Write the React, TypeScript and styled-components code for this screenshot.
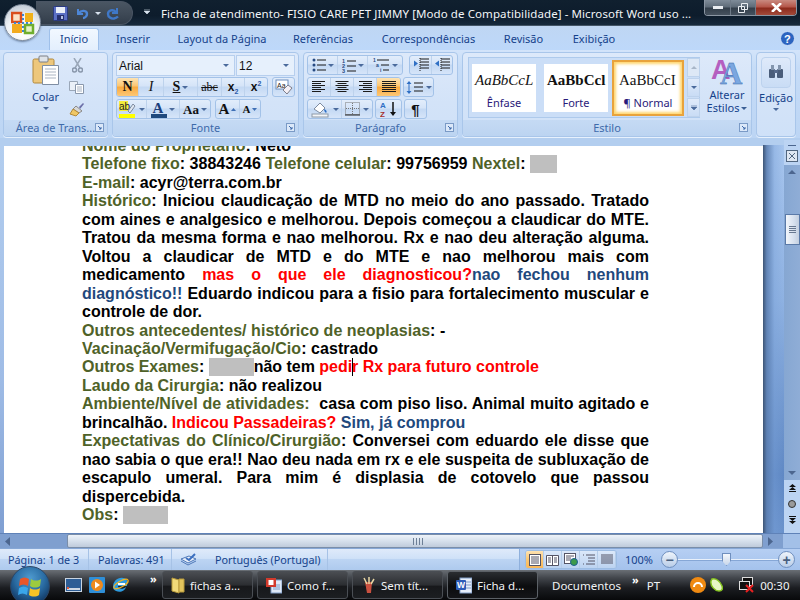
import React from "react";
import styled, { createGlobalStyle, css } from "styled-components";

const Global = createGlobalStyle`
  html, body { margin: 0; padding: 0; width: 800px; height: 600px; overflow: hidden; background: #bfdbff; }
  * { box-sizing: border-box; }
`;
const UI = `"Noto Sans", "Open Sans", sans-serif`;

const Screen = styled.div`
  position: relative; width: 800px; height: 600px; display: flex; flex-direction: column; overflow: hidden;
  font-family: ${UI};
`;

/* ---------- title bar ---------- */
const TitleBar = styled.div`
  height: 26px; flex: none; display: flex; align-items: flex-start; color: #f2f5f8;
  background: linear-gradient(180deg, #10202f 0%, #0d1c2c 60%, #16293c 96%, #6d7d8e 100%);
`;
const Qat = styled.div`
  margin-left: 36px; width: 97px; height: 24px; margin-top: 1px; display: flex; align-items: center; padding-left: 17px;
  border-radius: 0 12px 12px 0; border: 1px solid #4a5564; border-left: 0;
  background: linear-gradient(180deg, #4a5663 0%, #3f4a57 50%, #323d4a 100%);
`;
const QatSlot = styled.span<{ $w: number }>`
  width: ${p => p.$w}px; display: flex; justify-content: center; align-items: center; flex: none;
`;
const Customize = styled.span`
  width: 28px; display: flex; justify-content: center; margin-top: 9px; flex: none;
`;
const TitleText = styled.div`
  font-size: 11.5px; letter-spacing: 0.09px; line-height: 27px; white-space: pre; width: 543px; flex: none;
`;
const WinControls = styled.div`
  display: flex; height: 16px; width: 93px; flex: none; border: 1px solid #8b96a3; border-top: 0; border-radius: 0 0 4px 4px; overflow: hidden;
`;
const WinBtn = styled.div<{ $w: number; $close?: boolean }>`
  width: ${p => p.$w}px; flex: none; display: flex; align-items: center; justify-content: center;
  border-right: 1px solid #6f7b88;
  background: ${p => p.$close
    ? "linear-gradient(180deg,#c98a80 0%,#b5574a 45%,#8c2a1c 55%,#a34a3a 100%)"
    : "linear-gradient(180deg,#7f8c99 0%,#5f6c79 45%,#333f4b 55%,#46525f 100%)"};
`;
const OfficeOrb = styled.div`
  position: absolute; left: 4px; top: 4px; width: 37px; height: 37px; border-radius: 50%;
  background: radial-gradient(circle at 50% 80%, #ffffff 0%, #eef2f6 50%, #c3ccd6 85%, #8f99a6 100%);
  border: 1px solid #7f8b9b; display: flex; align-items: center; justify-content: center;
  box-shadow: 0 1px 2px rgba(30,50,80,.5);
`;

/* ---------- tabs ---------- */
const TabRow = styled.div`
  height: 24px; flex: none; display: flex; align-items: flex-end; padding-left: 49px;
  background: linear-gradient(180deg, #bfd6f3 0%, #bdd8fa 100%);
`;
const Tab = styled.div<{ $active?: boolean; $w: number }>`
  width: ${p => p.$w}px; height: 22px; flex: none; text-align: center; font-size: 11px; line-height: 21px; color: #15428b; white-space: nowrap;
  ${p => p.$active && css`
    background: linear-gradient(180deg,#f2f8ff 0%,#e3effd 100%);
    border: 1px solid #9fc0ea; border-bottom: 0; border-radius: 3px 3px 0 0;
    line-height: 20px;
  `}
`;
const HelpSlot = styled.div`
  margin-left: auto; margin-right: 5px; margin-bottom: 4px; display: flex;
`;

/* ---------- ribbon ---------- */
const Ribbon = styled.div`
  height: 88px; flex: none; display: flex; padding: 2px 4px 1px 3px; gap: 4px;
  background: linear-gradient(180deg, #d3e4fa 0%, #c6dcf7 20%, #bcd5f4 100%);
`;
const Group = styled.div<{ $w: number }>`
  width: ${p => p.$w}px; flex: none; display: flex; flex-direction: column; border: 1px solid #a9c6ea; border-radius: 4px; overflow: hidden;
  background: linear-gradient(180deg, #dde9fa 0%, #d3e3f8 60%, #cfe1f8 100%);
  box-shadow: 0 1px 0 #e7f1fd;
`;
const GroupBody = styled.div`
  flex: 1; min-height: 0; display: flex; padding: 2px 3px;
`;
const GroupLabel = styled.div`
  position: relative; height: 16px; flex: none; text-align: center; font-size: 11px; line-height: 16px; color: #3e6aaa;
  background: linear-gradient(180deg,#c5daf4 0%,#bcd4f1 100%);
`;
const Launcher = styled.span`
  position: absolute; right: 3px; top: 3px; width: 9px; height: 9px; display: flex;
`;
const PasteCol = styled.div`
  width: 55px; margin-left: 11px; flex: none; display: flex; flex-direction: column; align-items: center; color: #15428b; font-size: 11px;
`;
const PasteLabel = styled.div`
  margin-top: 5px; line-height: 13px;
`;
const ArrowRow = styled.div`
  margin-top: 4px; display: flex;
`;
const ClipCol = styled.div`
  flex: 1; margin-left: -4px; display: flex; flex-direction: column; align-items: flex-start; padding-top: 3px; gap: 8px;
`;
const CutSlot = styled.div`
  padding-left: 3px; display: flex;
`;
const Controls = styled.div`
  display: flex; flex-direction: column; gap: 2px; width: 100%;
`;
const Row = styled.div<{ $gap?: number }>`
  display: flex; height: 20px; gap: ${p => p.$gap ?? 4}px;
`;
const Combo = styled.div<{ $w: number }>`
  width: ${p => p.$w}px; flex: none; height: 21px; display: flex; align-items: center; justify-content: space-between; padding: 0 5px 0 2px;
  background: #e6f0fc; border: 1px solid #b7cfee; font: 12px "Liberation Sans", Arial, sans-serif; color: #111;
`;
const BtnGroup = styled.div`
  display: flex; height: 20px; flex: none; border: 1px solid #a3c2e8; border-radius: 3px; overflow: hidden;
  background: linear-gradient(180deg,#e2edfb 0%,#d5e4f8 45%,#c3d8f3 50%,#d6e5f9 100%);
`;
const Btn = styled.div<{ $w: number; $on?: boolean }>`
  width: ${p => p.$w}px; flex: none; display: flex; align-items: center; justify-content: center; gap: 2px;
  border-right: 1px solid #bdd2ec;
  &:last-child { border-right: 0; }
  ${p => p.$on && css`background: linear-gradient(180deg,#fde3b3 0%,#fbc672 45%,#f9a93f 50%,#fdc876 100%);`}
`;
const Glyph = styled.span<{ $f?: string; $s?: number; $c?: string; $i?: boolean; $b?: boolean; $u?: boolean; $x?: boolean }>`
  font-family: ${p => p.$f ?? `"Liberation Serif", serif`}; font-size: ${p => p.$s ?? 13}px; color: ${p => p.$c ?? "#111"};
  font-style: ${p => (p.$i ? "italic" : "normal")}; font-weight: ${p => (p.$b ? 700 : 400)}; line-height: 1;
  text-decoration: ${p => (p.$u ? "underline" : p.$x ? "line-through" : "none")};
`;
const Sub = styled.sub`
  font-size: 7px; color: #2a5aa8; line-height: 0;
`;
const Sup = styled.sup`
  font-size: 7px; color: #2a5aa8; line-height: 0;
`;
const Gallery = styled.div`
  width: 232px; height: 61px; margin: 2px 0 0 2px; flex: none; display: flex; align-items: center; border: 1px solid #aecaec; background: #cbdef7; padding-left: 3px; gap: 8px;
`;
const StyleCard = styled.div<{ $on?: boolean }>`
  width: ${p => (p.$on ? 72 : 64)}px; height: ${p => (p.$on ? 56 : 48)}px; flex: none; background: #fff; display: flex; flex-direction: column; align-items: center; overflow: hidden; white-space: nowrap;
  padding-top: ${p => (p.$on ? 3 : 1)}px;
  ${p => p.$on && css`border: 2px solid #e8a33c; box-shadow: inset 0 0 3px 2px #ffd66e; margin-left: -4px;`}
`;
const StylePreview = styled.div<{ $i?: boolean; $b?: boolean }>`
  font: ${p => (p.$i ? "italic " : "")}${p => (p.$b ? "700 " : "")}15px "Liberation Serif", serif; line-height: 30px; color: #111; width: 62px; overflow: hidden; text-align: left; padding-left: 2px;
`;
const StyleName = styled.div`
  font-size: 11px; line-height: 14px; color: #2a1a7a; margin-top: 1px;
`;
const GalleryScroll = styled.div`
  width: 13px; height: 59px; flex: none; margin-left: -5px; display: flex; flex-direction: column; gap: 1px;
`;
const ScrollCell = styled.div<{ $off?: boolean }>`
  flex: 1; display: flex; align-items: center; justify-content: center; border: 1px solid #bdd2ec;
  background: ${p => (p.$off ? "#dde8f6" : "linear-gradient(180deg,#dfeafa,#c9dcf5)")};
`;
const BigBtn = styled.div`
  width: 48px; flex: none; display: flex; flex-direction: column; align-items: center; font-size: 11px; line-height: 13px; color: #15428b; text-align: center; padding-top: 2px; margin-left: 3px;
`;
const BigIcon = styled.div`
  margin-bottom: 3px; display: flex;
`;
const ArrowInline = styled.span`
  display: inline-block; width: 0; height: 0; border: 3px solid transparent; border-top: 3px solid #3b5f95; border-bottom: 0; margin: 0 0 2px 2px;
`;
const EditBody = styled.div`
  display: flex; flex-direction: column; align-items: center; width: 100%; padding-top: 4px; font-size: 11px; color: #15428b;
`;
const EditIcon = styled.div`
  width: 30px; height: 31px; display: flex; align-items: flex-start; padding-top: 7px; justify-content: center; border: 1px solid #bcd2ee; border-radius: 4px; background: linear-gradient(180deg,#dfeafa,#c9dcf5);
`;
const EditText = styled.div`
  margin-top: 3px; line-height: 14px; margin-bottom: 3px;
`;

/* ---------- document ---------- */
const DocArea = styled.div`
  flex: 1; min-height: 0; display: flex; padding-top: 8px; background: #b3ceef;
`;
const LeftEdge = styled.div`
  width: 4px; flex: none; background: linear-gradient(180deg,#b3ceef 0%,#9fbce6 60%,#7f9fd2 100%);
`;
const Page = styled.div`
  width: 759px; flex: none; background: #fff; overflow: hidden; padding: 0 114px 0 78px;
`;
const Body = styled.div`
  margin-top: -9px; font: 700 16px/18.45px "Liberation Sans", Arial, sans-serif; color: #000; text-align: justify;
`;
const P = styled.div<{ $ls?: number }>`
  letter-spacing: ${p => p.$ls ?? 0}px;
`;
const Label = styled.span`color: #4f6228;`;
const Red = styled.span`color: #ff0000;`;
const Navy = styled.span`color: #1f497d;`;
const Redact = styled.span<{ $w: number }>`
  display: inline-block; width: ${p => p.$w}px; height: 18px; background: #bfbfbf; vertical-align: -4px;
`;
const Caret = styled.span`
  display: inline-block; width: 1px; height: 18px; background: #000; margin: 0 -1px 0 0; vertical-align: -4px;
`;
const Gutter = styled.div`
  width: 21px; flex: none; margin-top: -1px;
  background: linear-gradient(90deg,#3e5575 0%,rgba(90,125,175,.85) 18%,rgba(120,160,215,.35) 55%,rgba(160,195,240,0) 100%), linear-gradient(180deg,#a8c6ee 0%,#8fb2e2 40%,#5f88c4 85%,#6a92cc 100%);
`;
const VScroll = styled.div`
  width: 16px; flex: none; margin-top: -6px; display: flex; flex-direction: column; background: #bcd4f3;
`;
const SplitIcon = styled.div`
  height: 25px; flex: none; display: flex; flex-direction: column; align-items: center; padding-top: 5px; gap: 4px;
`;
const VTrack = styled.div`
  height: 315px; flex: none; display: flex; flex-direction: column; align-items: center; background: linear-gradient(90deg,#86a7d2,#8fadd6);
`;
const VArrow = styled.div<{ $down?: boolean }>`
  width: 0; height: 0; border: 4px solid transparent; margin: ${p => (p.$down ? "auto 0 5px" : "5px 0 0")};
  ${p => (p.$down ? "border-top-color:#4c668f; border-bottom:0;" : "border-bottom-color:#4c668f; border-top:0;")}
`;
const VThumb = styled.div`
  width: 15px; height: 31px; margin-top: 40px; border: 1px solid #5a7aa8; display: flex; flex-direction: column; align-items: center; justify-content: center; gap: 1px;
  background: linear-gradient(90deg,#f2f6fb,#d7e1ee 60%,#c3cfdf);
`;
const Grip = styled.span`
  width: 7px; height: 1px; background: #67788f;
`;
const BrowseBtns = styled.div`
  flex: 1; display: flex; flex-direction: column; align-items: center; justify-content: flex-start; gap: 8px; padding-top: 4px;
`;

/* ---------- horizontal scrollbar ---------- */
const HScroll = styled.div`
  height: 15px; flex: none; display: flex; background: #7f9fcf; border-top: 1px solid #5f82b8;
`;
const HArrowCell = styled.div<{ $w: number }>`
  width: ${p => p.$w}px; flex: none; display: flex; align-items: center; padding-left: 5px; background: #7f9fcf;
`;
const HThumb = styled.div`
  width: 696px; flex: none; display: flex; align-items: center; padding-left: 344px; gap: 1px;
  border: 1px solid #7a8ea9; border-radius: 2px; background: linear-gradient(180deg,#eef3f9,#d6e0ec 50%,#bfcbdb);
`;
const HGrip = styled.span`
  width: 1px; height: 7px; background: #6d7f96; margin-left: 1px;
`;
const HCorner = styled.div`
  flex: 1; background: #a3c0e8;
`;

/* ---------- status bar ---------- */
const Status = styled.div`
  height: 22px; flex: none; display: flex; align-items: stretch; font-size: 10.8px; color: #15428b;
  background: linear-gradient(180deg,#dfeafa 0%,#cfe1f8 45%,#bcd4f3 50%,#aecaee 100%);
  border-top: 1px solid #86a7d6;
`;
const StatusCell = styled.div<{ $w: number; $pad?: number }>`
  width: ${p => p.$w}px; flex: none; line-height: 19px; padding-left: ${p => p.$pad ?? 8}px; border-right: 1px solid #a6c2e6; white-space: nowrap; display: flex; align-items: center; gap: 17px;
`;
const StatusRight = styled.div`
  margin-left: 191px; display: flex; align-items: center; width: 281px; flex: none; border-left: 1px solid #8fb0dc; padding-left: 5px; background: linear-gradient(180deg,#b6cff3,#a4c2ec);
`;
const ViewBtns = styled.div`
  display: flex; height: 19px; flex: none; border: 1px solid #9dbde4; border-radius: 3px; overflow: hidden; background: linear-gradient(180deg,#dbe8f9,#bcd3f1);
`;
const ViewBtn = styled.div<{ $on?: boolean }>`
  width: 18px; display: flex; align-items: center; justify-content: center; border-right: 1px solid #b5cde9;
  ${p => p.$on && css`background: linear-gradient(180deg,#fde3b3 0%,#fbc672 50%,#f9b758 100%);`}
`;
const Zoom = styled.div`
  width: 44px; text-align: center; font-size: 11px; color: #15428b; flex: none;
`;
const RoundBtn = styled.div`
  width: 17px; height: 17px; flex: none; border-radius: 50%; border: 1px solid #6f8fbe; background: linear-gradient(180deg,#eef4fb,#b9cde8); display: flex; align-items: center; justify-content: center; color: #49607f; font: 700 14px/1 "Liberation Sans", sans-serif;
`;
const Slider = styled.div`
  position: relative; width: 100px; height: 1px; flex: none; background: #e8f0fa; box-shadow: 0 1px 0 #86a7d6;
`;
const SliderThumb = styled.div`
  position: absolute; left: 44px; top: -6px; width: 9px; height: 13px; border: 1px solid #6f8fbe; background: linear-gradient(180deg,#f5f8fc,#c9d7ea); clip-path: polygon(0 0,100% 0,100% 60%,50% 100%,0 60%);
`;

/* ---------- task bar ---------- */
const Taskbar = styled.div`
  height: 30px; flex: none; position: relative; display: flex; align-items: center; color: #f1f3f5; font-size: 11.5px; padding-left: 65px;
  background: linear-gradient(180deg,#6a6f75 0%,#44484e 25%,#1b1d21 60%,#08090b 100%);
`;
const StartOrb = styled.div`
  position: absolute; left: 10px; top: -4px; width: 40px; height: 40px; border-radius: 50%; display: flex; align-items: center; justify-content: center;
  background: radial-gradient(circle at 50% 30%,#4f9bd0 0%,#2a6ca3 45%,#123a66 78%,#081a33 100%);
  border: 1px solid #2c4666;
`;
const QuickIcons = styled.div`
  display: flex; width: 84px; flex: none; gap: 7px; align-items: center; margin-top: -1px;
`;
const More = styled.span<{ $left?: number }>`
  font-size: 11px; font-weight: 700; line-height: 1; margin-top: -12px; color: #fff; margin-left: ${p => p.$left ?? 0}px;
`;
const TaskBtn = styled.div<{ $on?: boolean; $left?: number }>`
  width: 91px; height: 28px; flex: none; margin: 0 4px 0 ${p => p.$left ?? 0}px; display: flex; align-items: center; gap: 5px; padding-left: 8px;
  border: 1px solid ${p => (p.$on ? "#5c6167" : "#4a4e54")}; border-radius: 3px; white-space: nowrap;
  background: ${p => p.$on ? "linear-gradient(180deg,#2a2d31,#0b0c0e 55%,#141518)" : "linear-gradient(180deg,#4a4d52,#2b2d31 50%,#17181b 55%,#1c1e21)"};
`;
const Docs = styled.div`
  margin-left: 10px; width: 80px; flex: none;
`;
const Tray = styled.div`
  display: flex; flex: 1; align-items: center;
`;
const TrayIcons = styled.div<{ $left: number }>`
  display: flex; margin-left: ${p => p.$left}px; gap: 4px; align-items: center;
`;
const Clock = styled.div`
  margin-left: 6px;
`;
const PT = styled.span`
  margin-left: 8px;
`;

/* ---------- drawn icons ---------- */
const Svg: React.FC<{ w: number; h: number; children: React.ReactNode }> = ({ w, h, children }) => (
  <svg width={w} height={h} viewBox={`0 0 ${w} ${h}`} style={{ display: "block", flex: "none" }}>{children}</svg>
);
const DownArrow: React.FC<{ c?: string }> = ({ c = "#4a6a9c" }) => <Svg w={6} h={3}><path d="M0 0h6L3 3z" fill={c} /></Svg>;
const Lines: React.FC<{ align: "l" | "c" | "r" | "j" }> = ({ align }) => {
  const rows = [13, 9, 13, 9, 13, 9];
  return <Svg w={14} h={12}>{rows.map((w0, i) => {
    const w = align === "j" ? 14 : w0;
    const x = align === "l" || align === "j" ? 0 : align === "c" ? (14 - w) / 2 : 14 - w;
    return <rect key={i} x={x} y={i * 2} width={w} height={1} fill="#1b1b1b" />;
  })}</Svg>;
};
const LauncherIcon = () => <Svg w={9} h={9}><rect x=".5" y=".5" width="8" height="8" fill="#dbe8f9" stroke="#7a9ac6" /><path d="M3 3l3 3M6 4v2H4" stroke="#3e6aaa" fill="none" /></Svg>;

const Save = () => <Svg w={15} h={15}><rect x=".5" y=".5" width="14" height="14" rx="1" fill="#5b6fc4" stroke="#2b3a80" /><rect x="3" y="1" width="9" height="6" fill="#e9eef8" /><rect x="4" y="9" width="7" height="5" fill="#26306e" /><rect x="8" y="10" width="2" height="3" fill="#b9c4e6" /></Svg>;
const Undo = () => <Svg w={14} h={14}><path d="M3 3v5h5" fill="none" stroke="#4d86d6" strokeWidth="2" /><path d="M4 7c2-3 8-3 8 1 0 2-2 4-4 4" fill="none" stroke="#4d86d6" strokeWidth="2.4" /></Svg>;
const Redo = () => <Svg w={14} h={14}><path d="M11 2v5H6" fill="none" stroke="#3f78c8" strokeWidth="2" /><path d="M10 6C7 3 2 4 2 8c0 3 3 5 6 4.500 2-.3 3-1 4-2" fill="none" stroke="#3f78c8" strokeWidth="2.4" /></Svg>;
const OfficeLogo = () => <Svg w={24} h={24}>
  <path d="M1 2h9v9H1z" fill="#fbe3c8" stroke="#d94f1e" strokeWidth="2.500" />
  <path d="M14 2h8v9h-8z" fill="#f0b21c" />
  <path d="M1 13h10v9H1z" fill="#f2ab1f" />
  <path d="M14 14h8v8h-8z" fill="#e4f2c8" stroke="#6fae2f" strokeWidth="2.500" />
  <g fill="#3f86d2"><rect x="11" y="3" width="2" height="2" /><rect x="11" y="7" width="2" height="2" /><rect x="11" y="11" width="2" height="2" /><rect x="11" y="15" width="2" height="2" /><rect x="11" y="19" width="2" height="2" /><rect x="3" y="11" width="2" height="2" /><rect x="7" y="11" width="2" height="2" /><rect x="15" y="11" width="2" height="2" /><rect x="19" y="11" width="2" height="2" /></g>
</Svg>;
const Paste = () => <Svg w={27} h={30}>
  <rect x="1" y="4" width="21" height="24" rx="1.500" fill="#edc77c" stroke="#b1883d" />
  <rect x="7" y="1" width="9" height="6" rx="1" fill="#dfe3e8" stroke="#7b7f86" />
  <path d="M10.500 10.500h16v19h-16z" fill="#fff" stroke="#7f8ea3" />
  <path d="M13 14h11M13 17h11M13 20h11M13 23h11" stroke="#aab4c2" />
</Svg>;
const Cut = () => <Svg w={11} h={15}><path d="M2 0l6 10M9 0L3 10" stroke="#9aa7b8" strokeWidth="1.500" /><circle cx="2.500" cy="12" r="2" fill="none" stroke="#8a98ac" strokeWidth="1.500" /><circle cx="8.500" cy="12" r="2" fill="none" stroke="#8a98ac" strokeWidth="1.500" /></Svg>;
const Copy = () => <Svg w={15} h={13}><path d="M.5.5h8v9h-8z" fill="#eaf0f8" stroke="#9aa7b8" /><path d="M6.500 3.500h8v9h-8z" fill="#fff" stroke="#8a98ac" /><path d="M8 6h5M8 8h5M8 10h5" stroke="#a6b2c3" /></Svg>;
const Painter = () => <Svg w={16} h={15}><path d="M10 5l4-4 1 1-4 5z" fill="#6c6fa8" /><path d="M7 4l6 5-3 2-6-4z" fill="#d8d8d8" stroke="#8a8a8a" /><path d="M4 7l6 4-3 3-6-2z" fill="#f0c765" stroke="#b2893a" /></Svg>;
const ClearFmt = () => <Svg w={18} h={16}><rect x="1" y="1" width="12" height="9" fill="#fff" stroke="#6f8fbe" /><text x="2" y="8.500" fontSize="7" fontFamily="Liberation Sans" fill="#222">Aa</text><path d="M8 11l5-5 4 3-5 6z" fill="#f5f0f5" stroke="#7d7d8a" /></Svg>;
const Highlight = () => <Svg w={18} h={18}><rect x="0" y="1" width="9" height="10" fill="#f4ee3c" /><text x="0" y="9.500" fontSize="10" fontFamily="Liberation Sans" fill="#222">ab</text><path d="M9 11l5-7 2 2-5 7z" fill="#dfe6f0" stroke="#7d8ba0" /><rect x="0" y="14" width="16" height="4" fill="#ffff00" /></Svg>;
const FontColor = () => <Svg w={16} h={18}><text x="1.500" y="12.500" fontSize="15" fontWeight="700" fontFamily="Liberation Serif" fill="#1c3f7c">A</text><rect x="0" y="14" width="16" height="4" fill="#1f497d" /></Svg>;
const Bullets = () => <Svg w={14} h={14}><g fill="#274a82"><circle cx="2" cy="2" r="1.500" /><circle cx="2" cy="7" r="1.500" /><circle cx="2" cy="12" r="1.500" /></g><path d="M5 2h9M5 7h9M5 12h9" stroke="#1b1b1b" /></Svg>;
const Numbers = () => <Svg w={14} h={15}><g fontSize="5.500" fontWeight="700" fontFamily="Liberation Sans" fill="#274a82"><text x="0" y="5">1</text><text x="0" y="10">2</text><text x="0" y="15">3</text></g><path d="M5 3h9M5 8h9M5 13h9" stroke="#1b1b1b" /></Svg>;
const Multi = () => <Svg w={17} h={16}><g fontSize="5" fontWeight="700" fontFamily="Liberation Sans" fill="#274a82"><text x="0" y="5">1</text><text x="3" y="10">a</text><text x="7" y="15">i</text></g><path d="M4 3h12M8 8h8M10 13h6" stroke="#1b1b1b" /></Svg>;
const Indent: React.FC<{ out?: boolean }> = ({ out }) => <Svg w={16} h={14}><path d="M7 1h9M7 4h9M7 7h9M7 10h9" stroke="#1b1b1b" /><path d="M7 0v14" stroke="#1b1b1b" strokeDasharray="1 1" />{out ? <path d="M1 5.500l4-3v6z" fill="#2f6fc4" /> : <path d="M5 5.500l-4-3v6z" fill="#2f6fc4" />}</Svg>;
const LineSp = () => <Svg w={18} h={15}><path d="M3 1l-2.500 3h5zM3 14l-2.500-3h5z" fill="#2f6fc4" /><path d="M3 4v7" stroke="#2f6fc4" /><path d="M8 3h9M8 7h9M8 11h9" stroke="#1b1b1b" /></Svg>;
const Shading = () => <Svg w={20} h={17}><path d="M3 8l6-6 5 5-5 5z" fill="#fff" stroke="#7d8ba0" /><path d="M13 8c3 1 3 3 2 4-1-1-2-2-2-4z" fill="#2f6fc4" /><rect x="1" y="13" width="16" height="3" fill="#f4f6f8" stroke="#8d99a8" /></Svg>;
const Borders = () => <Svg w={16} h={14}><path d="M.5.5h14v12H.5z" fill="none" stroke="#777" strokeDasharray="1 1" /><path d="M7.500 1v11M1 6.500h13" stroke="#777" strokeDasharray="1 1" /><path d="M0 13h15" stroke="#222" /></Svg>;
const Sort = () => <Svg w={18} h={16}><text x="0" y="7" fontSize="8" fontWeight="700" fontFamily="Liberation Sans" fill="#2f6fc4">A</text><text x="0" y="15.500" fontSize="8" fontWeight="700" fontFamily="Liberation Sans" fill="#a5302e">Z</text><path d="M13 1v12" stroke="#111" strokeWidth="1.500" /><path d="M10 11h6l-3 4z" fill="#111" /></Svg>;
const AlterStyles = () => <Svg w={32} h={28}><text x="0" y="22" fontSize="27" fontWeight="700" fontFamily="Liberation Sans" fill="#b45fc0">A</text><text x="9" y="27" fontSize="31" fontFamily="Liberation Serif" fontWeight="700" fill="#7ba7e0" stroke="#2f5fa5" strokeWidth=".4">A</text></Svg>;
const Binoculars = () => <Svg w={16} h={13}><rect x="1" y="4" width="6" height="9" rx="1" fill="#4a5d7a" /><rect x="9" y="4" width="6" height="9" rx="1" fill="#4a5d7a" /><rect x="3" y="0" width="3" height="5" fill="#8395ad" /><rect x="10" y="0" width="3" height="5" fill="#8395ad" /><rect x="6" y="5" width="4" height="3" fill="#56698a" /></Svg>;
const HelpIcon = () => <Svg w={15} h={15}><circle cx="7.500" cy="7.500" r="7" fill="#2c64c0" stroke="#cfe0f7" /><text x="4" y="11.500" fontSize="11" fontWeight="700" fontFamily="Liberation Sans" fill="#fff">?</text></Svg>;
const Proof = () => <Svg w={18} h={13}><path d="M1 6l7 4 8-4-7-3z" fill="#e8eef8" stroke="#4f78b8" /><path d="M1 8l7 4 8-4" fill="none" stroke="#4f78b8" /><path d="M6 5l3 2 6-6" fill="none" stroke="#3b6fc0" strokeWidth="2" /></Svg>;
const ViewPrint = () => <Svg w={12} h={12}><rect x=".5" y=".5" width="11" height="11" fill="#fff" stroke="#556" /><path d="M2 3h8M2 5h8M2 7h8M2 9h8" stroke="#556" /></Svg>;
const ViewRead = () => <Svg w={13} h={12}><path d="M.5 1.500h12v10h-12z" fill="#fff" stroke="#556" /><path d="M6.500 1v11M2 4h3M2 6h3M2 8h3M8 4h3M8 6h3M8 8h3" stroke="#556" /></Svg>;
const ViewWeb = () => <Svg w={14} h={13}><rect x=".5" y=".5" width="11" height="10" fill="#fff" stroke="#556" /><path d="M2 3h8M2 5h5M2 7h5" stroke="#556" /><circle cx="10" cy="9" r="3.500" fill="#3d9a4a" stroke="#1d5f95" /></Svg>;
const ViewOutline = () => <Svg w={12} h={11}><path d="M3 1h9M5 4h7M5 7h7M3 10h9" stroke="#556" /><path d="M0 1h1M0 10h1" stroke="#556" /></Svg>;
const ViewDraft = () => <Svg w={12} h={11}><path d="M0 1h12M0 3h12M0 5h12M0 7h12M0 9h12" stroke="#556" /></Svg>;
const WinLogo = () => <Svg w={25} h={24}>
  <path d="M2 5c3-2 6-2 9 0l-1 7c-3-2-6-2-9 0z" fill="#e8562a" />
  <path d="M13 5c3 2 7 2 10 0l-1 7c-3 2-7 2-10 0z" fill="#9ccb3f" />
  <path d="M1 14c3-2 6-2 9 0l-1 7c-3-2-6-2-9 0z" fill="#3aa6ea" />
  <path d="M12 14c3 2 7 2 10 0l-1 7c-3 2-7 2-10 0z" fill="#f7c325" />
</Svg>;
const Desk = () => <Svg w={17} h={14}><rect x=".5" y=".5" width="16" height="13" fill="#2d5d95" stroke="#c8d4e2" /><rect x="2" y="10" width="13" height="2" fill="#cfd8e3" /><rect x="2" y="9" width="2" height="2" fill="#e35a3a" /></Svg>;
const Wmp = () => <Svg w={16} h={16}><rect width="16" height="16" rx="1" fill="#2f8fd8" /><circle cx="8" cy="8" r="6" fill="#f08a1d" /><path d="M6 4.500l5 3.500-5 3.500z" fill="#fff" /></Svg>;
const Ie = () => <Svg w={17} h={17}><path d="M1 11c0-6 5-10 10-9 4 .5 5 3 4 8H6c0 3 5 4 8 1-1 4-6 6-10 4-2-1-3-2-3-4z" fill="#2d9be0" /><ellipse cx="9" cy="8" rx="8" ry="3" fill="none" stroke="#f0b323" strokeWidth="1.200" transform="rotate(-30 9 8)" /><rect x="6" y="7" width="7" height="2" fill="#fff" /></Svg>;
const Folder = () => <Svg w={14} h={17}><path d="M1 1l7 2v13l-7-2z" fill="#f1da79" stroke="#b99b3d" /><path d="M8 2h5v13H8z" fill="#e3c45d" stroke="#b99b3d" /></Svg>;
const PptIcon = () => <Svg w={16} h={17}><rect x="5" y="3" width="11" height="13" fill="#dfe9f7" stroke="#7f9cc6" /><path d="M7 8h7M7 10h7M7 12h7" stroke="#7f9cc6" /><rect x="0" y="1" width="10" height="9" fill="#d23a2c" /><rect x="2.500" y="3" width="5" height="5" fill="#fff" /></Svg>;
const PaintIcon = () => <Svg w={15} h={17}><path d="M4 5l2 11h4l1-11z" fill="#c9503f" /><path d="M3 1l3 6M8 0v7M13 2l-3 5" stroke="#e9d7a4" strokeWidth="1.500" /></Svg>;
const WordIcon = () => <Svg w={16} h={17}><rect x="4" y="1" width="12" height="15" fill="#e6eefa" stroke="#7f9cc6" /><path d="M9 5h6M9 8h6M9 11h6" stroke="#7f9cc6" /><rect x="0" y="3" width="10" height="10" rx="1" fill="#2c5cb8" /><text x="1" y="11" fontSize="8.500" fontWeight="700" fontFamily="Liberation Sans" fill="#fff">W</text></Svg>;
const OrangeTray = () => <Svg w={16} h={16}><circle cx="8" cy="8" r="8" fill="#f08a12" /><path d="M4 10a4 4 0 1 1 8 0" fill="none" stroke="#fff" strokeWidth="2" /></Svg>;
const LimeTray = () => <Svg w={13} h={14}><path d="M2 1c4-1 8 2 10 7 1 3 0 5-3 5C5 13 0 8 1 3z" fill="#e6f5c5" stroke="#84c21f" strokeWidth="1.500" /></Svg>;
const NetTray = () => <Svg w={16} h={16}><rect x="4.500" y=".5" width="10" height="8" fill="#111" stroke="#ddd" /><rect x="1.500" y="4.500" width="10" height="8" fill="#111" stroke="#ddd" /><path d="M8 8l7 7M15 8l-7 7" stroke="#e82020" strokeWidth="2" /></Svg>;
const BrowseUp = () => <Svg w={7} h={8}><path d="M3.500 0L7 3H0zM3.500 3L7 6H0z" fill="#111" /><rect y="7" width="7" height="1" fill="#111" /></Svg>;
const BrowseDown = () => <Svg w={7} h={8}><rect width="7" height="1" fill="#111" /><path d="M3.500 5L0 2h7zM3.500 8L0 5h7z" fill="#111" /></Svg>;
const BrowseDot = () => <Svg w={8} h={8}><circle cx="4" cy="4" r="3.500" fill="#9a9a9a" stroke="#333" /></Svg>;
const SplitGlyph = () => <Svg w={12} h={12}><rect x=".5" y=".5" width="11" height="11" fill="#dfe7f2" stroke="#51667f" /><path d="M3 3l6 6M9 3L3 9" stroke="#51667f" /></Svg>;

const App: React.FC = () => (
  <Screen>
    <Global />
    <TitleBar>
      <Qat>
        <QatSlot $w={15}><Save /></QatSlot>
        <QatSlot $w={27}><Undo /></QatSlot>
        <QatSlot $w={6}><DownArrow c="#d8e2ee" /></QatSlot>
        <QatSlot $w={24}><Redo /></QatSlot>
      </Qat>
      <Customize><Svg w={6} h={5}><path d="M0 0h6M0 2h6L3 5z" stroke="#d8e2ee" fill="#d8e2ee" strokeWidth=".6" /></Svg></Customize>
      <TitleText>Ficha de atendimento- FISIO CARE PET JIMMY [Modo de Compatibilidade] - Microsoft Word uso ...</TitleText>
      <WinControls>
        <WinBtn $w={26}><Svg w={10} h={4}><rect width="10" height="3" fill="#e9edf1" /></Svg></WinBtn>
        <WinBtn $w={25}><Svg w={10} h={10}><path d="M3.500.5h6v6h-6zM.500 3.500h6v6h-6z" fill="none" stroke="#e9edf1" /></Svg></WinBtn>
        <WinBtn $w={42} $close><Svg w={11} h={9}><path d="M1 0l9 9M10 0L1 9" stroke="#fff" strokeWidth="2.500" /></Svg></WinBtn>
      </WinControls>
    </TitleBar>
    <OfficeOrb><OfficeLogo /></OfficeOrb>
    <TabRow>
      <Tab $active $w={50}>Início</Tab>
      <Tab $w={68}>Inserir</Tab>
      <Tab $w={110}>Layout da Página</Tab>
      <Tab $w={92}>Referências</Tab>
      <Tab $w={119}>Correspondências</Tab>
      <Tab $w={71}>Revisão</Tab>
      <Tab $w={70}>Exibição</Tab>
      <HelpSlot><HelpIcon /></HelpSlot>
    </TabRow>
    <Ribbon>
      <Group $w={105}>
        <GroupBody>
          <PasteCol><Paste /><PasteLabel>Colar</PasteLabel><ArrowRow><DownArrow /></ArrowRow></PasteCol>
          <ClipCol><CutSlot><Cut /></CutSlot><Copy /><Painter /></ClipCol>
        </GroupBody>
        <GroupLabel>Área de Trans...<Launcher><LauncherIcon /></Launcher></GroupLabel>
      </Group>
      <Group $w={187}>
        <GroupBody>
          <Controls>
            <Row $gap={1}>
              <Combo $w={119}>Arial<DownArrow /></Combo>
              <Combo $w={59}>12<DownArrow /></Combo>
            </Row>
            <Row>
              <BtnGroup>
                <Btn $w={22} $on><Glyph $b $s={14}>N</Glyph></Btn>
                <Btn $w={25}><Glyph $i $s={14}>I</Glyph></Btn>
                <Btn $w={34}><Glyph $s={14} $u $b>S</Glyph><DownArrow /></Btn>
                <Btn $w={24}><Glyph $s={12} $x>abc</Glyph></Btn>
                <Btn $w={23}><Glyph $b $s={12} $f='"Liberation Sans", sans-serif'>x<Sub>2</Sub></Glyph></Btn>
                <Btn $w={22}><Glyph $b $s={12} $f='"Liberation Sans", sans-serif'>x<Sup>2</Sup></Glyph></Btn>
              </BtnGroup>
              <BtnGroup><Btn $w={21}><ClearFmt /></Btn></BtnGroup>
            </Row>
            <Row>
              <BtnGroup>
                <Btn $w={30}><Highlight /><DownArrow /></Btn>
                <Btn $w={33}><FontColor /><DownArrow /></Btn>
                <Btn $w={30}><Glyph $b $s={13}>Aa</Glyph><DownArrow /></Btn>
              </BtnGroup>
              <BtnGroup>
                <Btn $w={24}><Glyph $b $s={15}>A</Glyph><Svg w={5} h={3}><path d="M0 3h5L2.500 0z" fill="#3f6fb5" /></Svg></Btn>
                <Btn $w={20}><Glyph $b $s={11}>A</Glyph><Svg w={5} h={3}><path d="M0 0h5L2.500 3z" fill="#3f6fb5" /></Svg></Btn>
              </BtnGroup>
            </Row>
          </Controls>
        </GroupBody>
        <GroupLabel>Fonte<Launcher><LauncherIcon /></Launcher></GroupLabel>
      </Group>
      <Group $w={155}>
        <GroupBody>
          <Controls>
            <Row $gap={6}>
              <BtnGroup>
                <Btn $w={30}><Bullets /><DownArrow /></Btn>
                <Btn $w={30}><Numbers /><DownArrow /></Btn>
                <Btn $w={34}><Multi /><DownArrow /></Btn>
              </BtnGroup>
              <BtnGroup>
                <Btn $w={22}><Indent /></Btn>
                <Btn $w={20}><Indent out /></Btn>
              </BtnGroup>
            </Row>
            <Row $gap={2}>
              <BtnGroup>
                <Btn $w={23}><Lines align="l" /></Btn>
                <Btn $w={23}><Lines align="c" /></Btn>
                <Btn $w={23}><Lines align="r" /></Btn>
                <Btn $w={23} $on><Lines align="j" /></Btn>
              </BtnGroup>
              <BtnGroup><Btn $w={29}><LineSp /><DownArrow /></Btn></BtnGroup>
            </Row>
            <Row $gap={2}>
              <BtnGroup>
                <Btn $w={34}><Shading /><DownArrow /></Btn>
                <Btn $w={30}><Borders /><DownArrow /></Btn>
              </BtnGroup>
              <BtnGroup><Btn $w={25}><Sort /></Btn></BtnGroup>
              <BtnGroup><Btn $w={21}><Glyph $b $s={15} $f='"Liberation Sans", sans-serif'>¶</Glyph></Btn></BtnGroup>
            </Row>
          </Controls>
        </GroupBody>
        <GroupLabel><Launcher><LauncherIcon /></Launcher>Parágrafo</GroupLabel>
      </Group>
      <Group $w={290}>
        <GroupBody>
          <Gallery>
            <StyleCard><StylePreview $i>AaBbCcL</StylePreview><StyleName>Ênfase</StyleName></StyleCard>
            <StyleCard><StylePreview $b>AaBbCcl</StylePreview><StyleName>Forte</StyleName></StyleCard>
            <StyleCard $on><StylePreview>AaBbCcI</StylePreview><StyleName>¶ Normal</StyleName></StyleCard>
            <GalleryScroll>
              <ScrollCell $off><Svg w={6} h={3}><path d="M0 3h6L3 0z" fill="#a8b6c8" /></Svg></ScrollCell>
              <ScrollCell><DownArrow /></ScrollCell>
              <ScrollCell><Svg w={6} h={5}><path d="M0 0h6M0 2h6L3 5z" stroke="#4a6a9c" fill="#4a6a9c" strokeWidth=".6" /></Svg></ScrollCell>
            </GalleryScroll>
          </Gallery>
          <BigBtn><BigIcon><AlterStyles /></BigIcon>Alterar<span>Estilos<ArrowInline /></span></BigBtn>
        </GroupBody>
        <GroupLabel>Estilo<Launcher><LauncherIcon /></Launcher></GroupLabel>
      </Group>
      <Group $w={40}>
        <EditBody>
          <EditIcon><Binoculars /></EditIcon>
          <EditText>Edição</EditText>
          <DownArrow />
        </EditBody>
      </Group>
    </Ribbon>
    <DocArea>
      <LeftEdge />
      <Page>
        <Body>
          <P><Label>Nome do Proprietário</Label>: Neto</P>
          <P $ls={0.02}><Label>Telefone fixo</Label>: 38843246 <Label>Telefone celular</Label>: 99756959 <Label>Nextel</Label>: <Redact $w={27} /></P>
          <P><Label>E-mail</Label>: acyr@terra.com.br</P>
          <P><Label>Histórico</Label>: Iniciou claudicação de MTD no meio do ano passado. Tratado com aines e analgesico e melhorou. Depois começou a claudicar do MTE. Tratou da mesma forma e nao melhorou. Rx e nao deu alteração alguma. Voltou a claudicar de MTD e do MTE e nao melhorou mais com medicamento <Red>mas o que ele diagnosticou?</Red><Navy>nao fechou nenhum diagnóstico!!</Navy> Eduardo indicou para a fisio para fortalecimento muscular e controle de dor.</P>
          <P $ls={0.05}><Label>Outros antecedentes/ histórico de neoplasias</Label>: -</P>
          <P $ls={0.05}><Label>Vacinação/Vermifugação/Cio</Label>: castrado</P>
          <P $ls={-0.03}><Label>Outros Exames</Label>: <Redact $w={45} />não tem <Red>pedi<Caret />r Rx para futuro controle</Red></P>
          <P><Label>Laudo da Cirurgia</Label>: não realizou</P>
          <P><Label>Ambiente/Nível de atividades:</Label>&nbsp; casa com piso liso. Animal muito agitado e brincalhão. <Red>Indicou Passadeiras?</Red> <Navy>Sim, já comprou</Navy></P>
          <P><Label>Expectativas do Clínico/Cirurgião</Label>: Conversei com eduardo ele disse que nao sabia o que era!! Nao deu nada em rx e ele suspeita de subluxação de escapulo umeral. Para mim é displasia de cotovelo que passou dispercebida.</P>
          <P><Label>Obs</Label>: <Redact $w={45} /></P>
        </Body>
      </Page>
      <Gutter />
      <VScroll>
        <SplitIcon><Svg w={8} h={1}><rect width="8" height="1" fill="#4c668f" /></Svg><SplitGlyph /></SplitIcon>
        <VTrack>
          <VArrow />
          <VThumb><Grip /><Grip /><Grip /><Grip /></VThumb>
          <VArrow $down />
        </VTrack>
        <BrowseBtns><BrowseUp /><BrowseDot /><BrowseDown /></BrowseBtns>
      </VScroll>
    </DocArea>
    <HScroll>
      <HArrowCell $w={67}><Svg w={5} h={9}><path d="M5 0v9L0 4.500z" fill="#4c668f" /></Svg></HArrowCell>
      <HThumb><HGrip /><HGrip /><HGrip /><HGrip /></HThumb>
      <HArrowCell $w={20}><Svg w={5} h={9}><path d="M0 0v9l5-4.500z" fill="#4c668f" /></Svg></HArrowCell>
      <HCorner />
    </HScroll>
    <Status>
      <StatusCell $w={89}>Página: 1 de 3</StatusCell>
      <StatusCell $w={83} $pad={9}>Palavras: 491</StatusCell>
      <StatusCell $w={156} $pad={8}><Proof />Português (Portugal)</StatusCell>
      <StatusRight>
        <ViewBtns>
          <ViewBtn $on><ViewPrint /></ViewBtn>
          <ViewBtn><ViewRead /></ViewBtn>
          <ViewBtn><ViewWeb /></ViewBtn>
          <ViewBtn><ViewOutline /></ViewBtn>
          <ViewBtn><ViewDraft /></ViewBtn>
        </ViewBtns>
        <Zoom>100%</Zoom>
        <RoundBtn>−</RoundBtn>
        <Slider><SliderThumb /></Slider>
        <RoundBtn>+</RoundBtn>
      </StatusRight>
    </Status>
    <Taskbar>
      <StartOrb><WinLogo /></StartOrb>
      <QuickIcons><Desk /><Wmp /><Ie /><More $left={14}>»</More></QuickIcons>
      <TaskBtn $left={13}><Folder />fichas a...</TaskBtn>
      <TaskBtn><PptIcon />Como f...</TaskBtn>
      <TaskBtn><PaintIcon />Sem tít...</TaskBtn>
      <TaskBtn $on><WordIcon />Ficha d...</TaskBtn>
      <Docs>Documentos</Docs>
      <Tray>
        <More>»</More><PT>PT</PT>
        <TrayIcons $left={30}><OrangeTray /><LimeTray /></TrayIcons>
        <TrayIcons $left={15}><NetTray /></TrayIcons>
        <Clock>00:30</Clock>
      </Tray>
    </Taskbar>
  </Screen>
);

export default App;
